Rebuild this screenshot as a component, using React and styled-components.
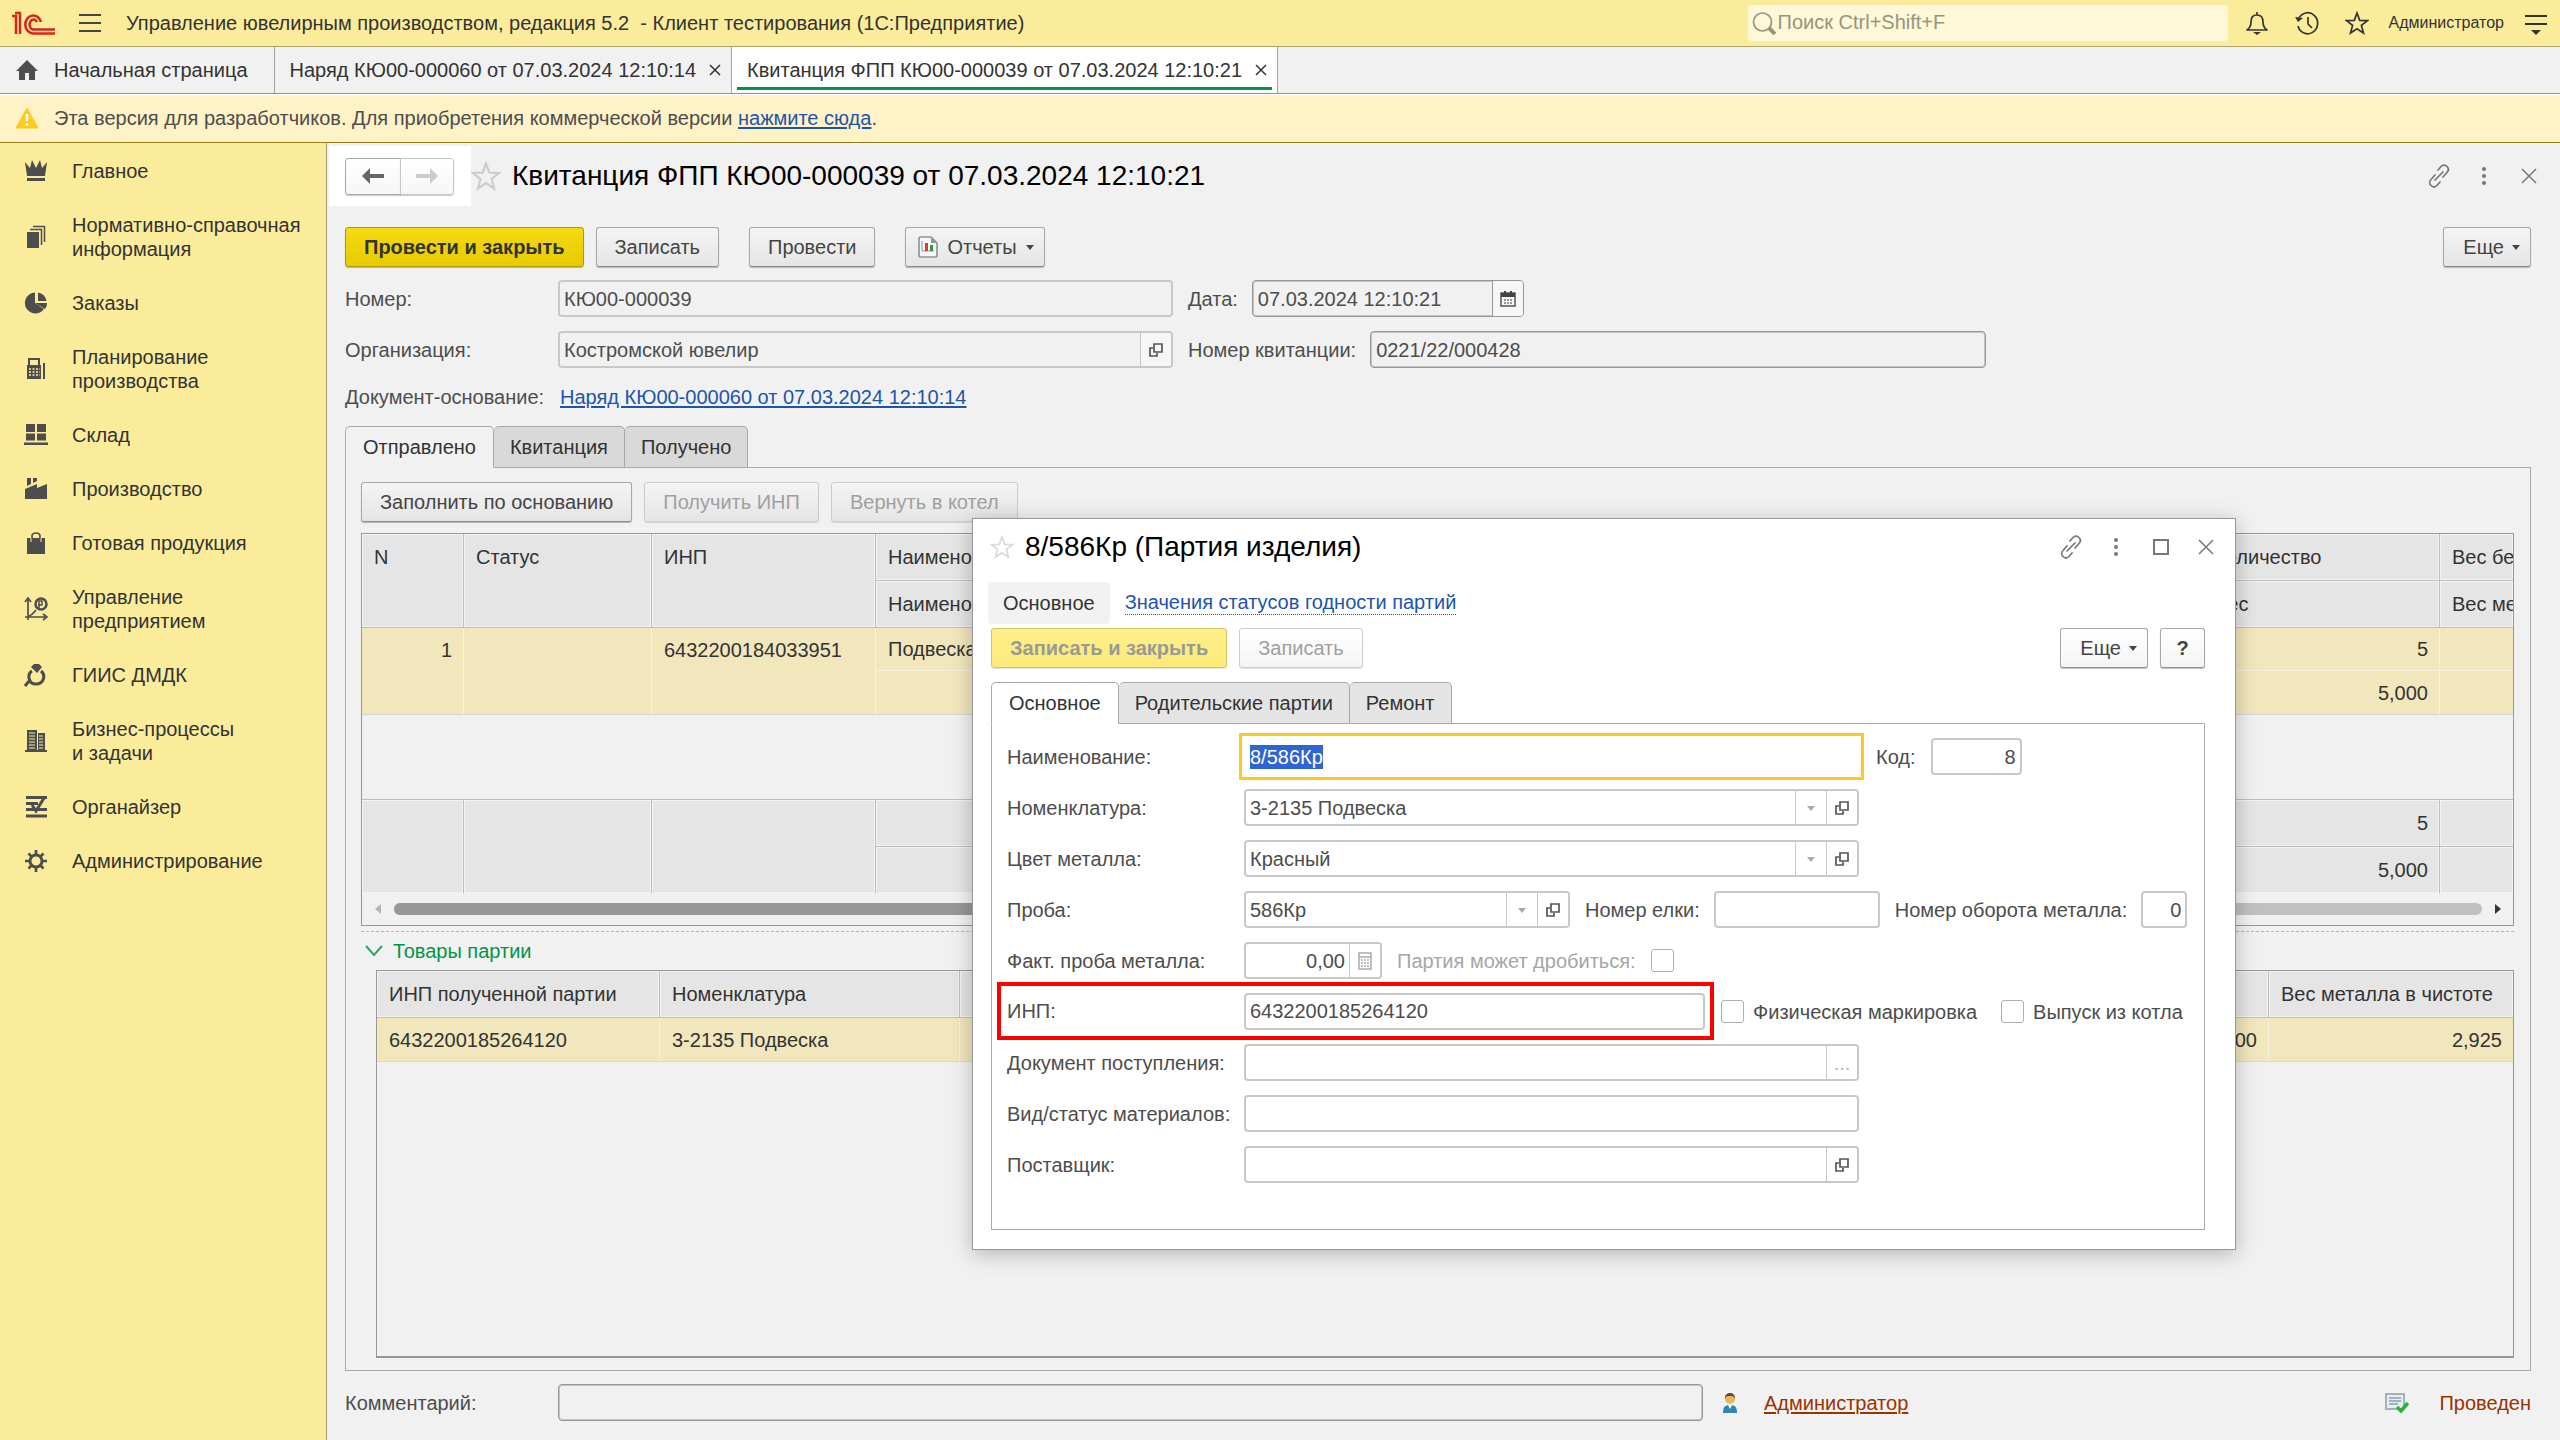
import React, { useEffect, useRef } from "react";
import styled, { createGlobalStyle, css } from "styled-components";

const GlobalStyle = createGlobalStyle`
  * {
    box-sizing: border-box;
  }

  body {
    margin: 0;
    background: #f1f1f1;
    color: #333;
    font-family: "Liberation Sans", Arial, sans-serif;
    font-size: 20px;
    line-height: 24px;
  }

  button,
  input {
    font: inherit;
    color: inherit;
    margin: 0;
  }
`;

/* ---------- page frame ---------- */

const Page = styled.div`
  position: relative;
  display: flex;
  flex-direction: column;
  min-height: 100vh;
`;

const TitleBar = styled.header`
  display: flex;
  align-items: center;
  height: 47px;
  padding: 0 12px 1px 10px;
  background: #fbec9c;
  border-bottom: 1px solid #aba36c;
`;

const AppTitle = styled.span`
  flex: 1;
  margin-left: 2px;
  white-space: pre;
`;

const IconButton = styled.button`
  display: flex;
  align-items: center;
  justify-content: center;
  width: ${(props) => props.$width || 24}px;
  height: 28px;
  padding: 0;
  border: 0;
  background: none;
  color: ${(props) => props.$color || "#333"};
`;

const Search = styled.label`
  display: flex;
  align-items: center;
  width: 480px;
  height: 36px;
  margin-right: 17px;
  padding-left: 4px;
  border-radius: 3px;
  background: #fef7d8;
  color: #98937c;

  input {
    flex: 1;
    min-width: 0;
    height: 32px;
    padding: 0 0 0 2px;
    border: 0;
    outline: 0;
    background: none;
  }

  input::placeholder {
    color: #98937c;
    opacity: 1;
  }
`;

const HeaderTools = styled.div`
  display: flex;
  align-items: center;
  gap: 26px;
`;

const UserName = styled.span`
  margin: 0 20px;
  font-size: 16px;
`;

const TabBar = styled.nav`
  display: flex;
  height: 48px;
  border-bottom: 1px solid #fff;
  box-shadow: inset 0 -1px 0 #8f8f94;
`;

const PageTab = styled.div`
  display: flex;
  align-items: center;
  position: relative;
  margin-bottom: 1px;
  padding: 0 ${(props) => (props.$home ? 26 : 4)}px 0 15px;
  border-right: 1px solid #a5a5a5;
  background: ${(props) => (props.$active ? "#fff" : "#f1f1f1")};
  white-space: nowrap;

  ${(props) =>
    props.$active &&
    css`
      &::after {
        content: "";
        position: absolute;
        left: 5px;
        right: 5px;
        bottom: 3px;
        height: 3px;
        background: #009646;
      }
    `}

  svg:first-child {
    margin-right: ${(props) => (props.$home ? 15 : 0)}px;
  }

  button {
    margin-left: 7px;
  }
`;

const Notice = styled.div`
  display: flex;
  align-items: center;
  height: 48px;
  padding: 0 0 2px 15px;
  background: #fff2c6;
  border-bottom: 1px solid #967d1c;
  color: #4d4d4d;

  svg {
    margin-right: 15px;
  }
`;

const Link = styled.a`
  color: ${(props) => (props.$brown ? "#993300" : "#1c55ae")};
  text-decoration: underline;
  text-decoration-thickness: 2px;
  text-underline-offset: 2px;
`;

const Body = styled.div`
  display: flex;
  flex: 1;
`;

const Sidebar = styled.nav`
  flex: none;
  width: 327px;
  border-right: 1px solid #a79d68;
  background: #fbec9c;
  padding-top: 1px;
`;

const SideItem = styled.a`
  display: flex;
  align-items: center;
  gap: 24px;
  padding: 15px 20px 15px 24px;
  color: #333;
  text-decoration: none;
  white-space: pre-line;

  svg {
    flex: none;
    color: #4d4d4d;
  }
`;

const Main = styled.main`
  display: flex;
  flex: 1;
  flex-direction: column;
  min-width: 0;
  padding: 3px 29px 19px 18px;
  color: #4d4d4d;
`;

/* ---------- shared controls ---------- */

const Row = styled.div`
  display: flex;
  align-items: center;
`;

const Spacer = styled.div`
  flex: 1;
`;

const Button = styled.button`
  display: flex;
  align-items: center;
  justify-content: center;
  gap: 8px;
  height: 40px;
  padding: 0 ${(props) => (props.$menu ? "10px 0 19px" : "18px")};
  border: 1px solid #a8a8a8;
  border-bottom-color: #8c8c8c;
  border-radius: 3px;
  background: ${(props) => (props.$white ? "linear-gradient(#fff, #f4f4f4)" : "linear-gradient(#f4f4f4, #e5e5e5)")};
  box-shadow: 0 1px 1px rgba(0, 0, 0, 0.25);
  color: #444;
  white-space: nowrap;

  ${(props) =>
    props.$primary &&
    css`
      border-color: #b09a00;
      background: linear-gradient(#f4da14, #e6cb00);
      color: #333;
      font-weight: bold;
    `}

  &:disabled {
    border-color: #ccc;
    box-shadow: 0 1px 1px rgba(0, 0, 0, 0.12);
    color: #a0a0a0;
    ${(props) =>
      props.$primary &&
      css`
        border-color: #d3c26a;
        background: linear-gradient(#fff08a, #fbe978);
        color: #999;
      `}
  }
`;

const FieldBox = styled.div`
  display: flex;
  flex: none;
  width: ${(props) => props.$width}px;
  height: 37px;
  border: ${(props) => (props.$strong ? "1px solid #979797" : "2px solid #c8c8c8")};
  border-radius: 4px;
  background: ${(props) => (props.$white ? "#fff" : "#f1f1f1")};
  box-shadow: ${(props) => (props.$strong ? "inset 0 0 0 1px #c4c4c4" : "none")};
  overflow: hidden;

  input {
    flex: 1;
    min-width: 0;
    padding: 0 ${(props) => (props.$strong ? 5 : 4)}px;
    border: 0;
    outline: 0;
    background: none;
    color: #4d4d4d;
    text-align: ${(props) => (props.$right ? "right" : "left")};
  }

  input::selection {
    background: #2f65d3;
    color: #fff;
  }

  button {
    display: flex;
    flex: none;
    align-items: center;
    justify-content: center;
    width: 31px;
    padding: 0;
    border: 0;
    border-left: 1px solid ${(props) => (props.$strong ? "#979797" : "#c8c8c8")};
    background: ${(props) => (props.$white ? "#fff" : "#f6f6f6")};
    color: #555;
  }

  button:disabled {
    color: #b5b5b5;
  }

  ${(props) =>
    props.$focused &&
    css`
      border-color: #fff;
      border-radius: 0;
      outline: 3px solid #fdcb1b;
      outline-offset: 2px;
    `}
`;

const FieldLabel = styled.label`
  flex: none;
  width: ${(props) => (props.$width ? props.$width + "px" : "auto")};
  margin: 0 ${(props) => props.$gap || 0}px 0 ${(props) => props.$before || 0}px;
  color: ${(props) => (props.$muted ? "#a6a6a6" : "inherit")};
  white-space: nowrap;
`;

const Check = styled.input`
  appearance: none;
  flex: none;
  width: 23px;
  height: 23px;
  border: 1px solid #b0b0b0;
  border-radius: 3px;
  background: #fff;
`;

const Tabs = styled.div`
  display: flex;
  margin-bottom: -1px;
  position: relative;
`;

const Tab = styled.button`
  height: 42px;
  padding: 0 16px;
  border: 1px solid #a9a9a9;
  border-left-width: ${(props) => (props.$active ? 1 : 0)}px;
  border-radius: 5px 5px 0 0;
  background: ${(props) => (props.$white ? "#e4e4e4" : "#d9d9d9")};
  color: #333;

  ${(props) =>
    props.$active &&
    css`
      padding: 0 17px;
      border-bottom-color: transparent;
      background: ${props.$white ? "#fff" : "#f1f1f1"};
    `}
`;

const TabPanel = styled.section`
  display: flex;
  flex-direction: column;
  border: 1px solid #a9a9a9;
`;

/* ---------- document form ---------- */

const FormHead = styled.div`
  display: flex;
  align-items: center;
  height: 60px;
`;

const HistoryBox = styled.div`
  display: flex;
  align-items: center;
  align-self: stretch;
  width: 142px;
  margin-left: -16px;
  padding-left: 16px;
  background: #fff;
`;

const HistoryButton = styled.button`
  display: flex;
  align-items: center;
  justify-content: center;
  width: ${(props) => (props.$next ? 54 : 56)}px;
  height: 37px;
  margin-left: ${(props) => (props.$next ? -1 : 0)}px;
  padding: 0;
  border: 1px solid ${(props) => (props.$next ? "#c6c6c6" : "#a8a8a8")};
  border-radius: ${(props) => (props.$next ? "0 3px 3px 0" : "3px 0 0 3px")};
  background: linear-gradient(#fff, #f6f6f6);
  box-shadow: 0 1px 1px rgba(0, 0, 0, 0.2);
  color: ${(props) => (props.$next ? "#ccc" : "#666")};
`;

const Title = styled.h1`
  flex: 1;
  margin: 0 0 0 11px;
  color: #000;
  font-size: 28px;
  font-weight: normal;
  line-height: 32px;
`;

const WindowTools = styled.div`
  display: flex;
  gap: 21px;
  margin-right: ${(props) => props.$shift || 0}px;
`;

const Toolbar = styled.div`
  display: flex;
  gap: 12px;
  margin: ${(props) => props.$margin || 0};
`;

const ReportButton = styled(Button)`
  gap: 9px;
  margin-left: 18px;
  padding-left: 12px;
`;

const HelpButton = styled(Button)`
  width: 45px;
  padding: 0;
  font-weight: bold;
`;

const PostButton = styled(Button)`
  margin-left: 18px;
`;

const Fields = styled.div`
  display: flex;
  flex-direction: column;
  gap: 14px;
`;

const BasisRow = styled.div`
  display: flex;
  align-items: center;
  height: 30px;
  margin: 14px 0;
`;

const DocPanel = styled(TabPanel)`
  flex: 1;
  padding: 14px 16px 12px 15px;
`;

const TableFrame = styled.div`
  display: flex;
  flex-direction: column;
  border: 1px solid #979797;
  border-bottom-width: ${(props) => (props.$grow ? 2 : 1)}px;
  margin-left: ${(props) => (props.$grow ? 15 : 0)}px;
  flex: ${(props) => (props.$grow ? 1 : "none")};
  overflow: hidden;
`;

const Table = styled.table`
  width: 100%;
  border-collapse: separate;
  border-spacing: 0;
  table-layout: fixed;
  color: #333;

  th,
  td {
    height: 47px;
    padding: 0 11px 0 12px;
    border-right: 1px solid #bdbdbd;
    border-bottom: 1px solid #bdbdbd;
    font-weight: normal;
    text-align: left;
    white-space: nowrap;
    overflow: hidden;
  }

  thead th,
  tfoot td {
    background: #e5e5e5;
    box-shadow: inset 0 0 0 1px #f3f3f3;
  }

  th[rowspan] {
    padding-top: 11px;
    vertical-align: top;
  }

  tbody td {
    height: 43px;
    border-color: #f6f1de;
    background: #f2e6bd;
  }

  tbody tr:last-child td {
    height: 44px;
  }

  tbody tr:last-child td,
  tbody td[rowspan] {
    border-bottom-color: #d6d6d6;
  }

  td[rowspan] {
    padding-top: 10px;
    vertical-align: top;
  }

  td.num {
    text-align: right;
  }

  tr > :last-child.edge {
    border-right: 0;
  }

  tbody.rest tr:last-child td {
    height: 85px;
    border-right: 0;
    border-bottom-color: #bdbdbd;
    background: none;
  }

  tfoot tr:last-child td,
  tfoot td[rowspan] {
    border-bottom-color: #f1f1f1;
  }
`;

const ScrollRow = styled.div`
  display: flex;
  align-items: center;
  gap: 12px;
  height: 31px;
  padding: 0 12px 2px 13px;
`;

const ScrollTrack = styled.div`
  flex: 1;
  height: 12px;
  border-radius: 6px;
  background: #c0c0c0;

  &::before {
    content: "";
    display: block;
    width: 66%;
    height: 12px;
    border-radius: 6px;
    background: #979797;
  }
`;

const Group = styled.button`
  display: flex;
  align-items: center;
  gap: 8px;
  width: 100%;
  height: 38px;
  padding: 0 4px;
  border: 0;
  background: none;
  color: #009646;
`;

const Splitter = styled.hr`
  width: 100%;
  margin: 5px 0 0;
  border: 0;
  border-top: 1px dashed #b5b5b5;
`;

const Footer = styled.footer`
  display: flex;
  align-items: center;
  margin-top: 13px;

  svg {
    flex: none;
  }
`;

const CommentField = styled(FieldBox)`
  width: 1145px;
  margin-right: 19px;
`;

const Author = styled(Link)`
  margin-left: 26px;
`;

const Posted = styled.span`
  margin-left: 30px;
  color: #993300;
`;

/* ---------- batch window ---------- */

const Dialog = styled.section`
  position: absolute;
  left: 972px;
  top: 518px;
  width: 1264px;
  padding: 0 30px 19px 18px;
  border: 1px solid #979797;
  background: #fff;
  box-shadow: 0 4px 20px rgba(0, 0, 0, 0.25);
  color: #4d4d4d;
`;

const DialogHead = styled.div`
  display: flex;
  align-items: center;
  height: 56px;
  margin-left: -1px;
`;

const DialogNav = styled.div`
  display: flex;
  align-items: center;
  height: 42px;
  margin: 7px 0 4px -3px;
`;

const NavCurrent = styled.span`
  height: 42px;
  padding: 9px 15px;
  border-radius: 4px;
  background: #f2f2f2;
  color: #333;
`;

const NavLink = styled.a`
  margin-left: 15px;
  border-bottom: 1px dotted #1c55ae;
  color: #1c55ae;
  text-decoration: none;
  line-height: 23px;
`;

const DialogPanel = styled(TabPanel)`
  gap: 14px;
  padding: 14px 17px 46px 15px;
`;

const Marked = styled.div`
  display: flex;
  align-items: center;
  width: 717px;
  height: 58px;
  margin: -11px 7px -10px -10px;
  padding-left: 6px;
  border: 4px solid #f00;
`;

/* ---------- icons ---------- */

const Svg = ({ size = 24, width, height, children, ...rest }) => (
  <svg width={width || size} height={height || size} viewBox={`0 0 ${width || size} ${height || size}`} fill="none" {...rest}>
    {children}
  </svg>
);

const LogoIcon = () => (
  <Svg width={46} height={26} stroke="#d9241c" strokeWidth="2.500">
    <path d="M2 6h4v18M5 3h5v21" />
    <path d="M31 12a8 9 0 1 0-8 11.500H45" />
    <path d="M27 12a4 5 0 1 0-4 7.500H45" />
  </Svg>
);

const BurgerIcon = () => (
  <Svg stroke="#444" strokeWidth="2">
    <path d="M1 4h22M1 12h22M1 20h22" />
  </Svg>
);

const SearchIcon = () => (
  <Svg stroke="currentColor" strokeWidth="1.700">
    <circle cx="10.500" cy="11" r="9" />
    <path d="M17 17l6 6" strokeWidth="4" />
  </Svg>
);

const BellIcon = () => (
  <Svg stroke="currentColor" strokeWidth="1.700" strokeLinejoin="round">
    <path d="M12 1v3M2 19c3-2 4-4 4-8 0-5 2-7 6-7s6 2 6 7c0 4 1 6 4 8z" />
    <path d="M8 21h8l-4 3z" fill="currentColor" stroke="none" />
  </Svg>
);

const HistoryIcon = () => (
  <Svg stroke="currentColor" strokeWidth="1.700">
    <path d="M3.500 8A10 10.500 0 1 1 3 15" />
    <path d="M13 6v7l4 4" />
    <path d="M0 6l8 1-5 4z" fill="currentColor" stroke="none" />
  </Svg>
);

const StarIcon = ({ size = 24, color = "currentColor" }) => (
  <svg width={size} height={size} viewBox="0 0 24 24" fill="none" stroke={color} strokeWidth="1.700">
    <path d="M12 2l2.700 7.300 7.800.3-6.100 4.800 2.100 7.600-6.500-4.300L5.500 22l2.100-7.600L1.500 9.600l7.800-.3z" />
  </svg>
);

const ServiceIcon = () => (
  <Svg stroke="currentColor" strokeWidth="2">
    <path d="M1 5h22M1 13h22" />
    <path d="M7 19h10l-5 5z" fill="currentColor" stroke="none" />
  </Svg>
);

const HomeIcon = () => (
  <Svg fill="#4d4d4d">
    <path d="M12 2L1 13h3v9h6v-7h4v7h6v-9h3z" />
  </Svg>
);

const CloseIcon = ({ size = 12, width = 1.5 }) => (
  <Svg size={size} stroke="currentColor" strokeWidth={width}>
    <path d={`M1 1L${size - 1} ${size - 1}M${size - 1} 1L1 ${size - 1}`} />
  </Svg>
);

const WarningIcon = () => (
  <Svg>
    <path d="M12 2L23 22H1z" fill="#fdcb1b" stroke="#fdcb1b" strokeLinejoin="round" />
    <path d="M12 8v7M12 17v3" stroke="#fff" strokeWidth="2.500" />
  </Svg>
);

const ArrowIcon = ({ right }) => (
  <Svg width={22} height={16} fill="currentColor">
    <path d={right ? "M22 8l-8-8v6H0v4h14v6z" : "M0 8l8-8v6h14v4H8v6z"} />
  </Svg>
);

const LinkIcon = () => (
  <Svg stroke="currentColor" strokeWidth="1.700" strokeLinecap="round">
    <path d="M8 16l8-8" />
    <path d="M11 6l3-3.500c2-2 4.500-1.500 6 0s2 4 0 6l-4 4.500" />
    <path d="M8 11l-4 4.500c-2 2-1.500 4.500 0 6s4 2 6 0l3-3.500" />
  </Svg>
);

const DotsIcon = () => (
  <Svg fill="currentColor">
    <circle cx="12" cy="5" r="2" />
    <circle cx="12" cy="12" r="2" />
    <circle cx="12" cy="19" r="2" />
  </Svg>
);

const SquareIcon = () => (
  <Svg size={16} stroke="currentColor" strokeWidth="2">
    <path d="M1 1h14v14H1z" />
  </Svg>
);

const CaretIcon = ({ color = "#444" }) => (
  <Svg width={8} height={6} fill={color}>
    <path d="M0 1h8L4 6z" />
  </Svg>
);

const SideCaret = ({ right }) => (
  <Svg width={7} height={10} fill={right ? "#333" : "#b5b5b5"}>
    <path d={right ? "M1 0l6 5-6 5z" : "M6 0L0 5l6 5z"} />
  </Svg>
);

const OpenIcon = () => (
  <Svg size={16} stroke="currentColor" strokeWidth="1.700">
    <path d="M6 2h8v8H6z" />
    <path d="M5 6H2v8h7v-3" />
  </Svg>
);

const CalendarIcon = () => (
  <Svg size={16}>
    <path d="M1 2h14v13H1z" stroke="#555" strokeWidth="1.500" />
    <path d="M1 2h14v4H1zM4 0h2v3H4zM10 0h2v3h-2z" fill="#444" />
    <path d="M4 9h8M4 12h8" stroke="#777" strokeWidth="1.500" strokeDasharray="2 1" />
  </Svg>
);

const CalcIcon = () => (
  <Svg width={14} height={18}>
    <path d="M1 1h12v16H1zM1 5h12" stroke="#aaa" strokeWidth="1.500" />
    <path d="M3 8h8M3 11h8M3 14h8" stroke="#aaa" strokeWidth="1.500" strokeDasharray="2 1" />
  </Svg>
);

const ReportIcon = () => (
  <Svg width={20} height={22}>
    <path d="M3 1h10l6 6v12q0 2-2 2H3q-2 0-2-2V3q0-2 2-2z" fill="#f4f6f8" stroke="#8b979f" strokeWidth="1.700" />
    <path d="M13 1v6h6z" fill="#8b979f" />
    <path d="M4 5v10h12" stroke="#8b979f" />
    <path d="M7 7h3v8H7z" fill="#e8352e" />
    <path d="M12 9h3v6h-3z" fill="#2c9a3c" />
  </Svg>
);

const ChevronIcon = () => (
  <Svg width={20} height={12} stroke="#2fa666" strokeWidth="2">
    <path d="M1 1l8 9 8-9" />
  </Svg>
);

const PersonIcon = () => (
  <Svg width={16} height={20}>
    <path d="M1 20c0-6 2-8 7-8s7 2 7 8z" fill="#2f86b5" />
    <path d="M6 12l2 4 2-4z" fill="#fff" />
    <circle cx="8" cy="6" r="5" fill="#eab65c" />
    <path d="M3 6c-1-8 11-8 10 0-1-3-2-3-5-3S4 3 3 6z" fill="#5d4a36" />
  </Svg>
);

const PostedIcon = () => (
  <Svg width={24} height={20}>
    <path d="M1 1h18v15H1z" fill="#e8edf2" stroke="#a3b1bd" strokeWidth="2" />
    <path d="M4 5h12M4 8h12M4 11h9" stroke="#8d9eae" strokeWidth="1.500" />
    <path d="M12 14l4 4 7-8" stroke="#2fae3e" strokeWidth="3.500" />
  </Svg>
);

const sideIcons = {
  crown: <path d="M1 3l5 6 2-8 4 8 4-8 2 8 5-6-2 14H3zM3 19h18v3H3z" fill="currentColor" />,
  docs: (
    <>
      <path d="M3 7h12v16H3z" fill="currentColor" />
      <path d="M6 4.500h11.500V20M9 1.500h11.500V17" stroke="currentColor" strokeWidth="1.500" />
    </>
  ),
  pie: (
    <>
      <path d="M11 1.500A10.500 10.500 0 1 0 20 18l-9-6z" fill="currentColor" />
      <path d="M14 1.500A10 10 0 0 1 22.500 10H14zM11 12h12c0 2-.5 4-2 6z" fill="currentColor" />
    </>
  ),
  planning: (
    <>
      <path d="M3 8h14v14H3z" fill="currentColor" />
      <path d="M5 8V2h10v6M20 6v16" stroke="currentColor" strokeWidth="2" />
      <path d="M5 12h11M5 15h11M5 18h11" stroke="#fbec9c" strokeWidth="1.300" strokeDasharray="2 1.500" />
    </>
  ),
  stock: <path d="M2 1h9v8H2zM13 1h9v8h-9zM2 10.500h9v7H2zM13 10.500h9v7h-9zM0 19.500h24V22H0z" fill="currentColor" />,
  factory: <path d="M1 12l12-5v4l10-4v15H1zM3 1h4v6l-4 2zM9 1h4v3L9 6z" fill="currentColor" />,
  bag: (
    <>
      <path d="M3 7h18v16H3z" fill="currentColor" />
      <path d="M8 11V5c0-4 8-4 8 0v6" stroke="currentColor" strokeWidth="1.700" />
      <path d="M7 7v4M17 7v4" stroke="#fbec9c" />
    </>
  ),
  globe: (
    <>
      <path d="M4 23V3M1 20h20M1 5l3-4 3 4M19 17l4 3-4 3M5 19c4-1 5-4 7-6" stroke="currentColor" strokeWidth="1.700" />
      <circle cx="17" cy="7" r="5.500" stroke="currentColor" strokeWidth="2.500" />
      <path d="M15 11V4h3v4h-4" stroke="currentColor" strokeWidth="1.500" />
    </>
  ),
  ring: (
    <>
      <path d="M7 4l3-3h5l3 3-5 6z" fill="currentColor" />
      <path d="M8 8c-5 3-4 13 4 13s10-9 5-13M6 17l-5 6" stroke="currentColor" strokeWidth="3" />
    </>
  ),
  building: (
    <>
      <path d="M3 1h10v21H3zM14 4h7v18h-7z" fill="currentColor" />
      <path d="M5 4h6M5 7h6M5 10h6M5 13h6M5 16h6M5 19h6M15 7h4M15 10h4M15 13h4M15 16h4M15 19h4" stroke="#fbec9c" />
      <path d="M1 22h22" stroke="currentColor" strokeWidth="2" />
    </>
  ),
  organizer: <path d="M2 2.500h21M2 8.500h12M2 14.500h21M2 21h21M8 10l4 6 8-13" stroke="currentColor" strokeWidth="3" />,
  gear: (
    <>
      <circle cx="12" cy="12" r="6" stroke="currentColor" strokeWidth="3" />
      <path d="M12 1v5M12 18v5M1 12h5M18 12h5M4.500 4.500L8 8M16 16l3.500 3.500M4.500 19.500L8 16M16 8l3.500-3.500" stroke="currentColor" strokeWidth="2.700" />
    </>
  ),
};

const sections = [
  { icon: "crown", text: "Главное" },
  { icon: "docs", text: "Нормативно-справочная\nинформация" },
  { icon: "pie", text: "Заказы" },
  { icon: "planning", text: "Планирование\nпроизводства" },
  { icon: "stock", text: "Склад" },
  { icon: "factory", text: "Производство" },
  { icon: "bag", text: "Готовая продукция" },
  { icon: "globe", text: "Управление\nпредприятием" },
  { icon: "ring", text: "ГИИС ДМДК" },
  { icon: "building", text: "Бизнес-процессы\nи задачи" },
  { icon: "organizer", text: "Органайзер" },
  { icon: "gear", text: "Администрирование" },
];

/* ---------- pieces ---------- */

const Field = ({ id, value = "", inputRef, children, ...box }) => (
  <FieldBox {...box}>
    <input id={id} ref={inputRef} defaultValue={value} />
    {children}
  </FieldBox>
);

const OpenButton = () => (
  <button aria-label="Открыть">
    <OpenIcon />
  </button>
);

const DropButton = () => (
  <button aria-label="Выбрать">
    <CaretIcon color="#aaa" />
  </button>
);

const GoodsTable = () => (
  <TableFrame>
    <Table>
      <colgroup>
        <col width="102" />
        <col width="188" />
        <col width="224" />
        <col />
        <col width="238" />
        <col width="73" />
      </colgroup>
      <thead>
        <tr>
          <th rowSpan="2">N</th>
          <th rowSpan="2">Статус</th>
          <th rowSpan="2">ИНП</th>
          <th>Наименование</th>
          <th>Количество</th>
          <th className="edge">Вес без вставок</th>
        </tr>
        <tr>
          <th>Наименование</th>
          <th>Вес</th>
          <th className="edge">Вес металла</th>
        </tr>
      </thead>
      <tbody>
        <tr>
          <td rowSpan="2" className="num">1</td>
          <td rowSpan="2" />
          <td rowSpan="2">6432200184033951</td>
          <td>Подвеска</td>
          <td className="num">5</td>
          <td className="edge" />
        </tr>
        <tr>
          <td />
          <td className="num">5,000</td>
          <td className="edge" />
        </tr>
      </tbody>
      <tbody className="rest">
        <tr>
          <td colSpan="6" />
        </tr>
      </tbody>
      <tfoot>
        <tr>
          <td rowSpan="2" />
          <td rowSpan="2" />
          <td rowSpan="2" />
          <td />
          <td className="num">5</td>
          <td className="edge" />
        </tr>
        <tr>
          <td />
          <td className="num">5,000</td>
          <td className="edge" />
        </tr>
      </tfoot>
    </Table>
    <ScrollRow>
      <SideCaret />
      <ScrollTrack />
      <SideCaret right />
    </ScrollRow>
  </TableFrame>
);

const BatchTable = () => (
  <TableFrame $grow>
    <Table>
      <colgroup>
        <col width="283" />
        <col width="300" />
        <col />
        <col width="244" />
      </colgroup>
      <thead>
        <tr>
          <th>ИНП полученной партии</th>
          <th>Номенклатура</th>
          <th />
          <th className="edge">Вес металла в чистоте</th>
        </tr>
      </thead>
      <tbody>
        <tr>
          <td>6432200185264120</td>
          <td>3-2135 Подвеска</td>
          <td className="num">5,000</td>
          <td className="num edge">2,925</td>
        </tr>
      </tbody>
    </Table>
  </TableFrame>
);

const BatchDialog = () => {
  const nameRef = useRef(null);

  useEffect(() => {
    nameRef.current.focus();
    nameRef.current.select();
  }, []);

  return (
    <Dialog>
      <DialogHead>
        <StarIcon color="#d9d9d9" />
        <Title as="h2">8/586Кр (Партия изделия)</Title>
        <WindowTools $shift={-13}>
          <IconButton $color="#777" aria-label="Ссылка"><LinkIcon /></IconButton>
          <IconButton $color="#777" aria-label="Меню"><DotsIcon /></IconButton>
          <IconButton $color="#777" aria-label="Развернуть"><SquareIcon /></IconButton>
          <IconButton $color="#777" aria-label="Закрыть"><CloseIcon size={16} /></IconButton>
        </WindowTools>
      </DialogHead>
      <DialogNav>
        <NavCurrent>Основное</NavCurrent>
        <NavLink href="#statuses">Значения статусов годности партий</NavLink>
      </DialogNav>
      <Toolbar $margin="0 0 14px">
        <Button $primary disabled>Записать и закрыть</Button>
        <Button $white disabled>Записать</Button>
        <Spacer />
        <Button $white $menu>Еще <CaretIcon /></Button>
        <HelpButton $white>?</HelpButton>
      </Toolbar>
      <Tabs>
        <Tab $active $white>Основное</Tab>
        <Tab $white>Родительские партии</Tab>
        <Tab $white>Ремонт</Tab>
      </Tabs>
      <DialogPanel>
        <Row>
          <FieldLabel $width={237} htmlFor="name">Наименование:</FieldLabel>
          <Field id="name" value="8/586Кр" inputRef={nameRef} $width={615} $white $focused />
          <FieldLabel $before={17} $gap={15} htmlFor="code">Код:</FieldLabel>
          <Field id="code" value="8" $width={91} $white $right />
        </Row>
        <Row>
          <FieldLabel $width={237} htmlFor="item">Номенклатура:</FieldLabel>
          <Field id="item" value="3-2135 Подвеска" $width={615} $white>
            <DropButton />
            <OpenButton />
          </Field>
        </Row>
        <Row>
          <FieldLabel $width={237} htmlFor="color">Цвет металла:</FieldLabel>
          <Field id="color" value="Красный" $width={615} $white>
            <DropButton />
            <OpenButton />
          </Field>
        </Row>
        <Row>
          <FieldLabel $width={237} htmlFor="fineness">Проба:</FieldLabel>
          <Field id="fineness" value="586Кр" $width={326} $white>
            <DropButton />
            <OpenButton />
          </Field>
          <FieldLabel $before={15} $gap={14} htmlFor="tree">Номер елки:</FieldLabel>
          <Field id="tree" $width={166} $white />
          <FieldLabel $before={15} $gap={14} htmlFor="turn">Номер оборота металла:</FieldLabel>
          <Field id="turn" value="0" $width={46} $white $right />
        </Row>
        <Row>
          <FieldLabel $width={237} htmlFor="fact">Факт. проба металла:</FieldLabel>
          <Field id="fact" value="0,00" $width={138} $white $right>
            <button aria-label="Калькулятор"><CalcIcon /></button>
          </Field>
          <FieldLabel $before={15} $gap={15} $muted htmlFor="split">Партия может дробиться:</FieldLabel>
          <Check type="checkbox" id="split" disabled />
        </Row>
        <Row>
          <Marked>
            <FieldLabel $width={237} htmlFor="inp">ИНП:</FieldLabel>
            <Field id="inp" value="6432200185264120" $width={461} $white />
          </Marked>
          <Check type="checkbox" id="marking" />
          <FieldLabel $before={9} $gap={24} htmlFor="marking">Физическая маркировка</FieldLabel>
          <Check type="checkbox" id="boiler" />
          <FieldLabel $before={9} htmlFor="boiler">Выпуск из котла</FieldLabel>
        </Row>
        <Row>
          <FieldLabel $width={237} htmlFor="receipt">Документ поступления:</FieldLabel>
          <Field id="receipt" $width={615} $white>
            <button disabled>...</button>
          </Field>
        </Row>
        <Row>
          <FieldLabel $width={237} htmlFor="kind">Вид/статус материалов:</FieldLabel>
          <Field id="kind" $width={615} $white />
        </Row>
        <Row>
          <FieldLabel $width={237} htmlFor="supplier">Поставщик:</FieldLabel>
          <Field id="supplier" $width={615} $white>
            <OpenButton />
          </Field>
        </Row>
      </DialogPanel>
    </Dialog>
  );
};

const App = () => (
  <Page>
    <GlobalStyle />
    <TitleBar>
      <LogoIcon />
      <IconButton $width={68} aria-label="Главное меню"><BurgerIcon /></IconButton>
      <AppTitle>Управление ювелирным производством, редакция 5.2  - Клиент тестирования (1С:Предприятие)</AppTitle>
      <Search>
        <SearchIcon />
        <input placeholder="Поиск Ctrl+Shift+F" aria-label="Поиск" />
      </Search>
      <HeaderTools>
        <IconButton aria-label="Уведомления"><BellIcon /></IconButton>
        <IconButton aria-label="История"><HistoryIcon /></IconButton>
        <IconButton aria-label="Избранное"><StarIcon /></IconButton>
      </HeaderTools>
      <UserName>Администратор</UserName>
      <IconButton aria-label="Сервис"><ServiceIcon /></IconButton>
    </TitleBar>
    <TabBar>
      <PageTab $home>
        <HomeIcon />
        Начальная страница
      </PageTab>
      <PageTab>
        Наряд КЮ00-000060 от 07.03.2024 12:10:14
        <IconButton aria-label="Закрыть"><CloseIcon /></IconButton>
      </PageTab>
      <PageTab $active>
        Квитанция ФПП КЮ00-000039 от 07.03.2024 12:10:21
        <IconButton aria-label="Закрыть"><CloseIcon /></IconButton>
      </PageTab>
    </TabBar>
    <Notice>
      <WarningIcon />
      <span>
        Эта версия для разработчиков. Для приобретения коммерческой версии <Link href="#buy">нажмите сюда</Link>.
      </span>
    </Notice>
    <Body>
      <Sidebar>
        {sections.map((section) => (
          <SideItem href="#section" key={section.icon}>
            <Svg>{sideIcons[section.icon]}</Svg>
            {section.text}
          </SideItem>
        ))}
      </Sidebar>
      <Main>
        <FormHead>
          <HistoryBox>
            <HistoryButton aria-label="Назад"><ArrowIcon /></HistoryButton>
            <HistoryButton $next aria-label="Вперед"><ArrowIcon right /></HistoryButton>
          </HistoryBox>
          <StarIcon size={30} color="#ccc" />
          <Title>Квитанция ФПП КЮ00-000039 от 07.03.2024 12:10:21</Title>
          <WindowTools $shift={-10}>
            <IconButton $color="#777" aria-label="Ссылка"><LinkIcon /></IconButton>
            <IconButton $color="#777" aria-label="Меню"><DotsIcon /></IconButton>
            <IconButton $color="#777" aria-label="Закрыть"><CloseIcon size={16} /></IconButton>
          </WindowTools>
        </FormHead>
        <Toolbar $margin="21px 0 13px">
          <Button $primary>Провести и закрыть</Button>
          <Button>Записать</Button>
          <PostButton>Провести</PostButton>
          <ReportButton $menu><ReportIcon /> Отчеты <CaretIcon /></ReportButton>
          <Spacer />
          <Button $menu>Еще <CaretIcon /></Button>
        </Toolbar>
        <Fields>
          <Row>
            <FieldLabel $width={213} htmlFor="number">Номер:</FieldLabel>
            <Field id="number" value="КЮ00-000039" $width={615} />
            <FieldLabel $before={15} $gap={14} htmlFor="date">Дата:</FieldLabel>
            <Field id="date" value="07.03.2024 12:10:21" $width={272} $strong>
              <button aria-label="Календарь"><CalendarIcon /></button>
            </Field>
          </Row>
          <Row>
            <FieldLabel $width={213} htmlFor="org">Организация:</FieldLabel>
            <Field id="org" value="Костромской ювелир" $width={615}>
              <OpenButton />
            </Field>
            <FieldLabel $before={15} $gap={14} htmlFor="receiptNo">Номер квитанции:</FieldLabel>
            <Field id="receiptNo" value="0221/22/000428" $width={616} $strong />
          </Row>
        </Fields>
        <BasisRow>
          <FieldLabel $width={215}>Документ-основание:</FieldLabel>
          <Link href="#basis">Наряд КЮ00-000060 от 07.03.2024 12:10:14</Link>
        </BasisRow>
        <Tabs>
          <Tab $active>Отправлено</Tab>
          <Tab>Квитанция</Tab>
          <Tab>Получено</Tab>
        </Tabs>
        <DocPanel>
          <Toolbar $margin="0 0 11px">
            <Button>Заполнить по основанию</Button>
            <Button disabled>Получить ИНП</Button>
            <Button disabled>Вернуть в котел</Button>
          </Toolbar>
          <GoodsTable />
          <Splitter />
          <Group>
            <ChevronIcon />
            Товары партии
          </Group>
          <BatchTable />
        </DocPanel>
        <Footer>
          <FieldLabel $width={213} htmlFor="comment">Комментарий:</FieldLabel>
          <CommentField $strong>
            <input id="comment" />
          </CommentField>
          <PersonIcon />
          <Author href="#author" $brown>Администратор</Author>
          <Spacer />
          <PostedIcon />
          <Posted>Проведен</Posted>
        </Footer>
      </Main>
    </Body>
    <BatchDialog />
  </Page>
);

export default App;
